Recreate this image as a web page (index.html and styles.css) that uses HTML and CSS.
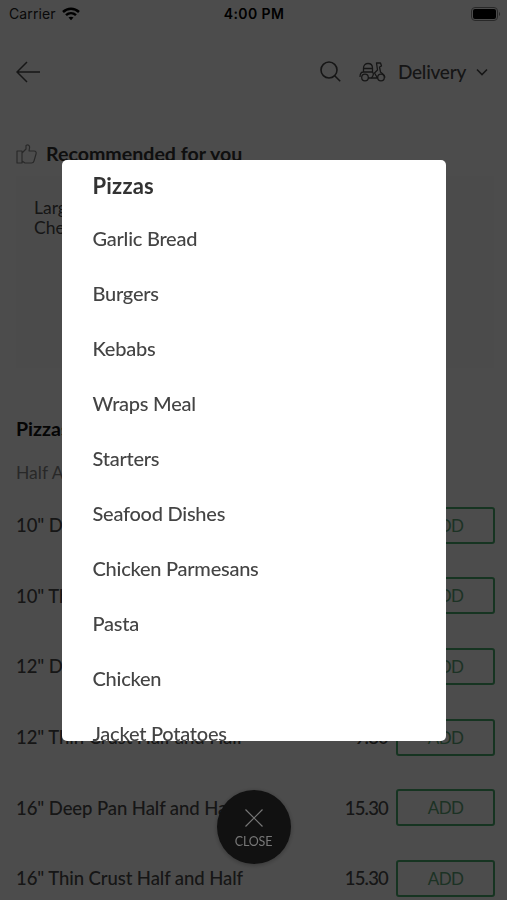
FILE: index.html
```
<!DOCTYPE html>
<html lang="en">
<head>
  <meta charset="utf-8">
  <title>Menu</title>
  <link rel="stylesheet" href="styles.css">
</head>
<body>
  <div class="screen">
    <div class="status-bar">
      <div class="carrier">
        <span>Carrier</span>
        <svg class="wifi" width="18" height="14" viewBox="0 0 18 14" fill="none" stroke="#000" stroke-width="2.5">
          <path d="M1 5C5.500 .7 12.500 .7 17 5"/>
          <path d="M4 8.200c2.900-2.700 7.100-2.700 10 0"/>
          <path d="M6.500 10.600c1.500-1.300 3.500-1.300 5 0L9 13.300z" fill="#000" stroke="none"/>
        </svg>
      </div>
      <span class="time">4:00 PM</span>
      <svg class="battery" width="30" height="14" viewBox="0 0 30 14">
        <rect x=".5" y=".5" width="26" height="13" rx="3.500" fill="none" stroke="#888"/>
        <rect x="2" y="2" width="23" height="10" rx="2" fill="#000"/>
        <path d="M28 5v4c1.500-.6 1.500-3.400 0-4z" fill="#888"/>
      </svg>
    </div>

    <div class="header">
      <svg width="24" height="22" viewBox="0 0 24 22" fill="none" stroke="#4a4a4a" stroke-width="1.500">
        <path d="M11 1L1 11l10 10M1 11h23"/>
      </svg>
      <div class="header-right">
        <svg class="search" width="21" height="21" viewBox="0 0 21 21" fill="none" stroke="#4a4a4a" stroke-width="1.600">
          <circle cx="9" cy="9" r="8"/>
          <path d="M14.700 14.700l5.500 5.500"/>
        </svg>
        <svg class="scooter" width="27" height="20" viewBox="0 0 27 20" fill="none" stroke="#4a4a4a" stroke-width="1.300" stroke-linejoin="round">
          <path d="M4.500 10V6c0-3 2-4.500 4.500-4.500S13.500 3 13.500 6v4M4.500 6.500h9M4.500 10h9c1.500 1.500 1 3.500-1 6H9M1 15c0-3 1.500-5 3.500-5"/>
          <circle cx="6" cy="15.500" r="3.300"/>
          <path d="M12.500 16h6l-3-5 3-3-1-7h4l1 3-2 1 1 5c2 2 4.500 2.500 4.500 5.500"/>
          <circle cx="22" cy="15.500" r="3.300"/>
        </svg>
        <span class="delivery">Delivery</span>
        <svg class="chevron" width="12" height="8" viewBox="0 0 12 8" fill="none" stroke="#4a4a4a" stroke-width="1.600">
          <path d="M1 1.500l5 5 5-5"/>
        </svg>
      </div>
    </div>

    <div class="recommended">
      <svg width="21" height="20" viewBox="0 0 21 20" fill="none" stroke="#888" stroke-width="1.200" stroke-linejoin="round">
        <path d="M1 7h5v12H1zM6 9l4-4V1.500C12.500 0 14 2 13.500 4L13 7h5c2 0 2.500 1.500 2 3l-2 7c-.4 1.500-1 2-2.500 2H9l-3-2z"/>
      </svg>
      <h2>Recommended for you</h2>
    </div>
    <div class="card">
      <p>Large<br>Cheese</p>
    </div>

    <h2 class="section-title">Pizzas</h2>
    <p class="section-subtitle">Half And Half</p>

    <div class="row">
      <span class="name">10" Deep Pan Half and Half</span>
      <span class="price">9.80</span>
      <button class="add">ADD</button>
    </div>
    <div class="row">
      <span class="name">10" Thin Crust Half and Half</span>
      <span class="price">9.80</span>
      <button class="add">ADD</button>
    </div>
    <div class="row">
      <span class="name">12" Deep Pan Half and Half</span>
      <span class="price">9.80</span>
      <button class="add">ADD</button>
    </div>
    <div class="row">
      <span class="name">12" Thin Crust Half and Half</span>
      <span class="price">9.80</span>
      <button class="add">ADD</button>
    </div>
    <div class="row">
      <span class="name">16" Deep Pan Half and Half</span>
      <span class="price">15.30</span>
      <button class="add">ADD</button>
    </div>
    <div class="row">
      <span class="name">16" Thin Crust Half and Half</span>
      <span class="price">15.30</span>
      <button class="add">ADD</button>
    </div>
  </div>

  <div class="overlay">
    <div class="modal">
      <ul>
        <li class="active">Pizzas</li>
        <li>Garlic Bread</li>
        <li>Burgers</li>
        <li>Kebabs</li>
        <li>Wraps Meal</li>
        <li>Starters</li>
        <li>Seafood Dishes</li>
        <li>Chicken Parmesans</li>
        <li>Pasta</li>
        <li>Chicken</li>
        <li>Jacket Potatoes</li>
      </ul>
    </div>
    <button class="close-button">
      <svg width="18" height="18" viewBox="0 0 18 18" stroke="#777" stroke-width="1.200">
        <path d="M.5 .5l17 17M17.500 .5l-17 17"/>
      </svg>
      <span>CLOSE</span>
    </button>
  </div>
</body>
</html>
```
FILE: styles.css
```
* {
  box-sizing: border-box;
}
body {
  margin: 0;
  font-family: Lato, sans-serif;
  color: #4a4a4a;
  background-color: #fff;
}
h2,
p,
ul {
  margin: 0;
  padding: 0;
}
.screen {
  height: 900px;
  overflow: hidden;
}
.status-bar {
  display: grid;
  grid-template-columns: 1fr auto 1fr;
  align-items: center;
  height: 27px;
  padding: 0 6px 0 9px;
  font-family: Inter, sans-serif;
  font-size: 14px;
}
.carrier {
  display: flex;
  align-items: center;
  gap: 6px;
}
.carrier span {
  width: 47px;
  color: #222;
  letter-spacing: 0.1px;
}
.time {
  margin-right: 2px;
  color: #000;
  font-weight: 600;
  letter-spacing: 0.4px;
}
.battery {
  justify-self: end;
}
.header {
  display: flex;
  justify-content: space-between;
  align-items: center;
  height: 89px;
  padding: 0 19px 0 16px;
}
.header-right {
  display: flex;
  align-items: center;
}
.scooter {
  margin-left: 18px;
}
.delivery {
  margin-left: 12px;
  font-size: 19px;
  font-weight: 500;
  letter-spacing: -0.25px;
}
.chevron {
  margin-left: 10px;
}
.recommended {
  display: flex;
  align-items: center;
  gap: 9px;
  height: 60px;
  padding: 16px 16px 0;
}
.recommended h2,
.section-title {
  font-size: 19.6px;
  font-weight: 700;
  line-height: 24px;
}
.recommended h2 {
  color: #333;
}
.card {
  height: 192px;
  margin: 0 13px 0 16px;
  padding: 22px 18px;
  background-color: #fcfcfc;
  font-size: 17.5px;
  line-height: 20px;
}
.section-title {
  margin: 49px 16px 0;
  color: #111;
}
.section-subtitle {
  margin: 20px 16px 5px;
  color: #888;
  font-size: 17.5px;
  line-height: 24px;
}
.row {
  display: flex;
  align-items: center;
  height: 70.6px;
  padding: 0 12px 0 16px;
  font-size: 18.5px;
}
.name {
  flex: 1;
  font-weight: 500;
  letter-spacing: -0.08px;
}
.price {
  margin-right: 8px;
  font-weight: 500;
  letter-spacing: -0.8px;
}
.add {
  width: 99px;
  height: 37px;
  padding: 0;
  border: 2px solid #4ab070;
  border-radius: 3px;
  background: none;
  color: #5fa87a;
  font-family: inherit;
  font-size: 17px;
  letter-spacing: -0.7px;
}
.overlay {
  position: fixed;
  top: 0;
  left: 0;
  width: 100%;
  height: 900px;
  padding-top: 160px;
  display: flex;
  flex-direction: column;
  align-items: center;
  background-color: rgba(0, 0, 0, 0.7);
}
.modal {
  width: 384px;
  height: 581px;
  overflow: hidden;
  border-radius: 5px;
  background-color: #fff;
}
.modal ul {
  padding-left: 31px;
  list-style: none;
}
.modal li {
  height: 55px;
  color: #444;
  font-size: 20px;
  font-weight: 500;
  line-height: 53px;
  letter-spacing: -0.25px;
}
.modal li.active {
  height: 52px;
  color: #333;
  font-size: 22px;
  font-weight: 700;
  line-height: 52px;
  letter-spacing: 0.2px;
}
.close-button {
  display: flex;
  flex-direction: column;
  align-items: center;
  gap: 8px;
  width: 74px;
  height: 74px;
  margin-top: 49px;
  padding: 19px 0 0;
  border: none;
  border-radius: 50%;
  background-color: #111;
  box-shadow: 0 1px 5px rgba(0, 0, 0, 0.3);
  color: #777;
  font-family: inherit;
  font-size: 12.5px;
  line-height: 14px;
  letter-spacing: -0.2px;
}
```
